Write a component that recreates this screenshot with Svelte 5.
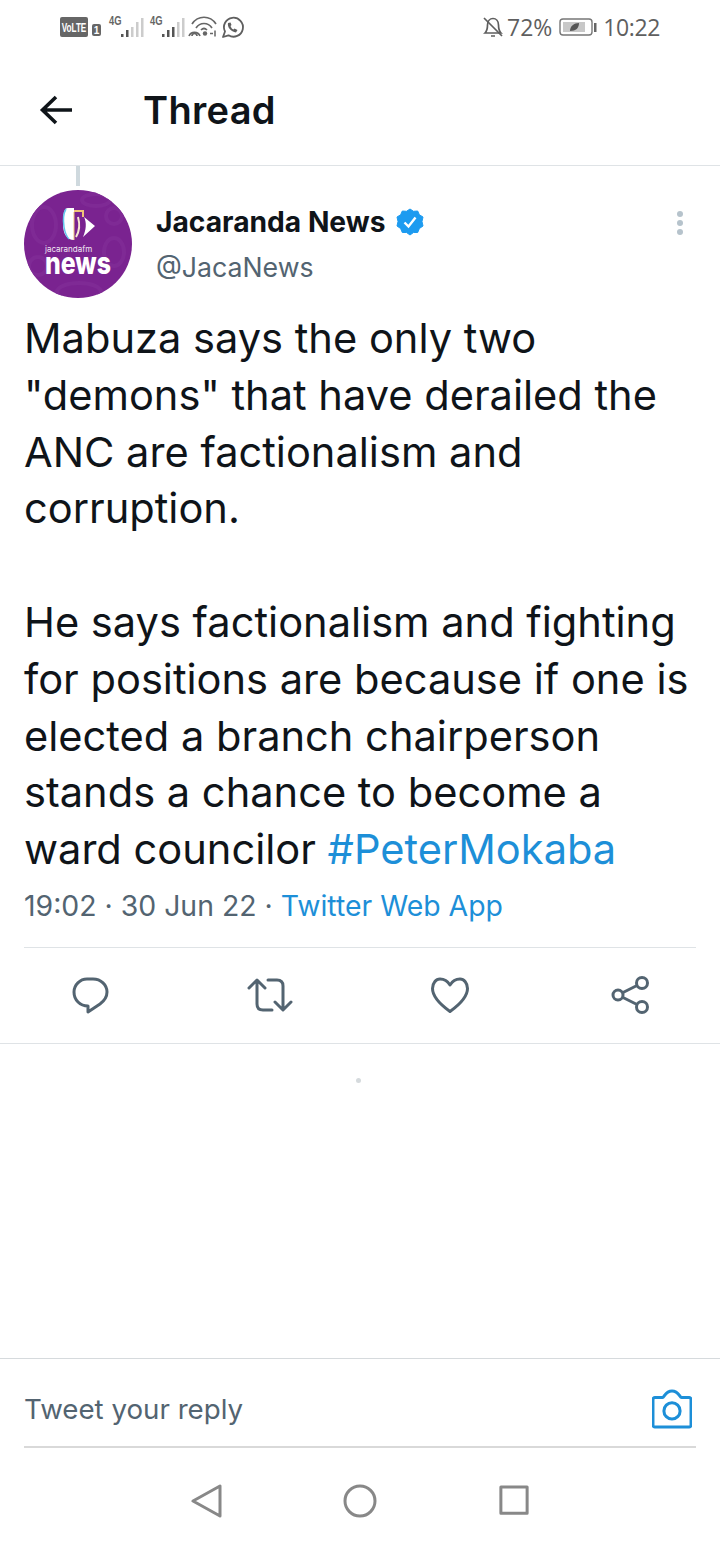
<script>
    const lines1 = [
        "Mabuza says the only two",
        '"demons" that have derailed the',
        "ANC are factionalism and",
        "corruption.",
    ];
    const lines2 = [
        "He says factionalism and fighting",
        "for positions are because if one is",
        "elected a branch chairperson",
        "stands a chance to become a",
    ];
</script>

<style>
    :global(body) {
        margin: 0;
        background: #fff;
    }
    .page {
        width: 720px;
        height: 1541px;
        display: flex;
        flex-direction: column;
        font-family: Inter, "Liberation Sans", sans-serif;
        color: #0f1419;
        overflow: hidden;
    }
    .status {
        height: 55px;
        display: flex;
        justify-content: space-between;
        padding-left: 60px;
        padding-right: 60px;
        color: #5f5f5f;
        font-family: "Open Sans", sans-serif;
        font-size: 23px;
    }
    .status-right {
        display: flex;
        align-items: center;
        padding-bottom: 2px;
    }
    .status-left {
        display: block;
    }
    .pct {
        margin-left: 4px;
    }
    .battery {
        margin: 0 6px 0 7px;
    }
    .time {
        letter-spacing: -0.4px;
    }
    .header {
        height: 111px;
        box-sizing: border-box;
        border-bottom: 1px solid #dfe3e6;
        display: flex;
        align-items: center;
        padding-left: 39px;
        gap: 70px;
    }
    .title {
        font-size: 38px;
        font-weight: 600;
        letter-spacing: 0.3px;
    }
    .thread-line {
        width: 4px;
        height: 20px;
        margin-left: 76px;
        background: #cfd9de;
    }
    .author {
        display: flex;
        margin: 4px 24px 0;
        gap: 24px;
        height: 108px;
    }
    .avatar {
        display: block;
    }
    .names {
        padding-top: 13px;
    }
    .name-row {
        display: flex;
        align-items: center;
        gap: 10px;
        font-size: 28.2px;
        font-weight: 700;
        height: 38px;
    }
    .handle {
        font-size: 26.7px;
        color: #536471;
        margin-top: 10px;
    }
    .more {
        margin-left: auto;
        margin-top: 21px;
        margin-right: 13px;
        display: flex;
        flex-direction: column;
        gap: 3px;
    }
    .more i {
        display: block;
        width: 6px;
        height: 6px;
        border-radius: 50%;
        background: #b6c3cc;
    }
    .body {
        margin: 12px 24px 0;
        font-size: 41.6px;
        line-height: 56.8px;
        white-space: nowrap;
    }
    .gap {
        height: 56.8px;
    }
    .tag,
    .source {
        color: #1d8fd8;
    }
    .meta {
        margin: 6px 24px 0;
        font-size: 28.4px;
        line-height: 44px;
        color: #536471;
    }
    .sep {
        margin: 19px 24px 0;
        height: 1px;
        background: #dfe3e6;
    }
    .actions {
        height: 95px;
        display: grid;
        grid-template-columns: repeat(4, 180px);
        align-items: center;
        justify-items: center;
    }
    .rule {
        height: 1px;
        background: #dfe3e6;
    }
    .spacer {
        flex: 1;
        position: relative;
    }
    .dot {
        position: absolute;
        left: 356px;
        top: 34px;
        width: 5px;
        height: 5px;
        border-radius: 50%;
        background: #d5dadd;
    }
    .reply {
        border-top: 1px solid #d6dadd;
    }
    .reply-inner {
        margin: 0 24px;
        height: 89px;
        box-sizing: border-box;
        border-bottom: 2px solid #d9d9d9;
        display: flex;
        align-items: center;
        justify-content: space-between;
        font-size: 27.7px;
        color: #536471;
        padding: 12px 4px 0 0;
    }
    .nav {
        height: 93px;
        display: flex;
        justify-content: center;
    }
    .nav-slot {
        width: 153.5px;
        display: flex;
        justify-content: center;
        padding-top: 36px;
        align-items: flex-start;
    }
    .square {
        margin-top: 1px;
    }
</style>

<div class="page">
    <div class="status">
        <div class="status-left">
            <svg width="185" height="55" viewBox="0 0 185 55">
                <rect x="0" y="17" width="28" height="20" rx="2" fill="#666" />
                <text transform="translate(14 32) scale(.68 1)" text-anchor="middle" font-family="Liberation Sans" font-size="12" font-weight="700" fill="#fff">VoLTE</text>
                <rect x="32" y="24" width="9" height="12" rx="2" fill="#666" />
                <text x="36.500" y="34" text-anchor="middle" font-family="Liberation Sans" font-size="10" font-weight="700" fill="#fff">1</text>

                <text transform="translate(49 25) scale(.72 1)" font-family="Liberation Sans" font-size="13" font-weight="700" fill="#666">4G</text>
                <g fill="#555"><rect x="61" y="34" width="2.500" height="3" /><rect x="66" y="30" width="2.500" height="7" /></g>
                <g fill="#ccc"><rect x="71" y="27" width="2.500" height="10" /><rect x="76" y="22" width="2.500" height="15" /><rect x="81" y="18" width="2.500" height="19" /></g>

                <text transform="translate(90 25) scale(.72 1)" font-family="Liberation Sans" font-size="13" font-weight="700" fill="#666">4G</text>
                <g fill="#555"><rect x="102" y="34" width="2.500" height="3" /><rect x="107" y="30" width="2.500" height="7" /><rect x="112" y="27" width="2.500" height="10" /></g>
                <g fill="#ccc"><rect x="117" y="22" width="2.500" height="15" /><rect x="122" y="18" width="2.500" height="19" /></g>

                <g fill="none" stroke="#666" stroke-width="1.700">
                    <path d="M132 24 C138 15 150 15 156 24" />
                    <path d="M136 28 C140 22 148 22 152 28" />
                    <path d="M141 30 C143 28 145 28 147 30" />
                    <path d="M129 36 A6 6 0 0 1 140 36" />
                    <path d="M132 36 A2.500 2.500 0 0 1 137 36" />
                </g>
                <circle cx="145" cy="33.500" r="2.200" fill="#666" />
                <path d="M150 33.500h3M155 30.500v6" stroke="#666" stroke-width="1.500" />

                <path d="M163 37 L165 31.500 A9.500 9.500 0 1 1 168.500 35.300 Z" fill="none" stroke="#5f5f5f" stroke-width="1.800" stroke-linejoin="round" />
                <path d="M168 23 C167 27 171 32 176 32.500 L177.500 30 L174.500 28.500 L173.500 29.500 C172 29 171 27.500 170.500 26 L171.500 25 L170.500 22.500 Z" fill="#5f5f5f" />
            </svg>
        </div>
        <div class="status-right">
            <svg width="20" height="22" viewBox="0 0 20 22" fill="none" stroke="#5f5f5f" stroke-width="1.700">
                <path d="M2 17 C4 15 4.500 13 4.500 9 C4.500 5 7 2.500 10 2.500 C13 2.500 15.500 5 15.500 9 C15.500 13 16 15 18 17 Z" />
                <path d="M8 20h4M1 2l18 18" />
            </svg>
            <span class="pct">72%</span>
            <svg class="battery" width="38" height="18" viewBox="0 0 38 18">
                <rect x="1" y="1" width="32" height="16" rx="3" fill="none" stroke="#777" stroke-width="1.400" />
                <rect x="4" y="4" width="22" height="10" fill="#c8c8c8" />
                <path d="M11 13 C11 8 15 5 20 5 C20 10 17 13 11 13Z" fill="#555" />
                <rect x="35" y="5" width="2.500" height="9" fill="#666" />
            </svg>
            <span class="time">10:22</span>
        </div>
    </div>

    <div class="header">
        <svg width="34" height="32" viewBox="0 0 34 32" fill="none" stroke="#0f1419" stroke-width="3.600">
            <path d="M33 16H4M17 3 3.500 16 17 29" />
        </svg>
        <div class="title">Thread</div>
    </div>

    <div class="thread-line"></div>

    <div class="author">
        <svg class="avatar" width="108" height="108" viewBox="0 0 108 108">
            <defs><clipPath id="round"><circle cx="54" cy="54" r="54" /></clipPath></defs>
            <circle cx="54" cy="54" r="54" fill="#7a2390" />
            <g clip-path="url(#round)" fill="none" stroke="#7f2a95" stroke-width="4">
                <ellipse cx="20" cy="35" rx="12" ry="18" />
                <ellipse cx="90" cy="62" rx="10" ry="14" />
                <ellipse cx="55" cy="102" rx="22" ry="9" />
                <ellipse cx="72" cy="10" rx="14" ry="6" />
                <circle cx="14" cy="76" r="9" />
                <circle cx="90" cy="26" r="8" />
            </g>
            <path d="M44 18 H50 V50 C43 50 39 44 39 34 C39 24 40 18 44 18Z" fill="#fff" />
            <path d="M42 19 C39.500 23 39 30 40 37 C41 43 43 47 45 49" fill="none" stroke="#63c6ee" stroke-width="1.500" />
            <path d="M50 21 H59 V27" fill="none" stroke="#f0c478" stroke-width="2" />
            <path d="M50 22 V50" stroke="#f0c478" stroke-width="1" />
            <path d="M60 27 L71 36 L59 47 C62 40 63 33 60 27Z" fill="#fff" />
            <path d="M54 27 C56 34 55 42 52 47" fill="none" stroke="#f7e7cf" stroke-width="2" />
            <text x="21" y="62" font-family="Inter, sans-serif" font-size="8" fill="#fff" opacity=".9">jacarandafm</text>
            <text transform="translate(21 84)" font-family="Inter, sans-serif" font-size="31" font-weight="800" fill="#fff" textLength="66" lengthAdjust="spacingAndGlyphs">news</text>
        </svg>
        <div class="names">
            <div class="name-row">
                <span>Jacaranda News</span>
                <svg width="28" height="28" viewBox="0 0 28 28">
                    <path d="M14 1 L17.500 3.300 L21.700 3 L23.400 6.800 L27 9 L26 13.500 L27 18 L23.400 20.500 L21.700 24.500 L17.500 24.500 L14 27 L10.500 24.500 L6.300 24.500 L4.600 20.500 L1 18 L2 13.500 L1 9 L4.600 6.800 L6.300 3 L10.500 3.300 Z" fill="#1d9bf0" stroke="#1d9bf0" stroke-linejoin="round" stroke-width="1" />
                    <path d="M8.500 14.500 L12.500 18.500 L19.500 9.500" fill="none" stroke="#fff" stroke-width="2.400" />
                </svg>
            </div>
            <div class="handle">@JacaNews</div>
        </div>
        <div class="more"><i></i><i></i><i></i></div>
    </div>

    <div class="body">
        {#each lines1 as line}
            <div>{line}</div>
        {/each}
        <div class="gap"></div>
        {#each lines2 as line}
            <div>{line}</div>
        {/each}
        <div>ward councilor <span class="tag">#PeterMokaba</span></div>
    </div>

    <div class="meta">19:02 · 30 Jun 22 · <span class="source">Twitter Web App</span></div>

    <div class="sep"></div>

    <div class="actions">
        <svg width="37" height="37" viewBox="0 0 37 37" fill="none" stroke="#536471" stroke-width="3" stroke-linejoin="round">
            <path d="M15 2 H21 C29 2 35 8 35 15 C35 21 32 24 28 27 L16 35 V29 C8 29 2 23 2 15 C2 8 8 2 15 2 Z" />
        </svg>
        <svg width="46" height="36" viewBox="0 0 46 36" fill="none" stroke="#536471" stroke-width="3" stroke-linecap="round" stroke-linejoin="round">
            <path d="M2 11 L10 3 L18 11 M10 4 V27 C10 31 12 33 16 33 H25" />
            <path d="M44 25 L36 33 L28 25 M36 32 V9 C36 5 34 3 30 3 H21" />
        </svg>
        <svg width="38" height="36" viewBox="0 0 38 36" fill="none" stroke="#536471" stroke-width="3" stroke-linejoin="round">
            <path d="M19 8 C16 3 12 2 9 2 C5 2 1.500 6 1.500 11.500 C1.500 20 10 28 19 34.500 C28 28 36.500 20 36.500 11.500 C36.500 6 33 2 29 2 C26 2 22 3 19 8 Z" />
        </svg>
        <svg width="38" height="38" viewBox="0 0 38 38" fill="none" stroke="#536471" stroke-width="3">
            <circle cx="7" cy="19" r="5" />
            <circle cx="31" cy="7" r="5.500" />
            <circle cx="31" cy="31" r="5.500" />
            <path d="M12 16.500 L26 9.500 M12 21.500 L26 28.500" />
        </svg>
    </div>
    <div class="rule"></div>

    <div class="spacer"><div class="dot"></div></div>

    <div class="reply">
        <div class="reply-inner">
            <span>Tweet your reply</span>
            <svg width="40" height="40" viewBox="0 0 42 42" fill="none" stroke="#1d8fd8" stroke-width="3.200" stroke-linejoin="round">
                <path d="M3 9 H11 C13 9 14 2 21 2 C28 2 29 9 31 9 H39 C40 9 41 10 41 11 V38 C41 39 40 40 39 40 H3 C2 40 1 39 1 38 V11 C1 10 2 9 3 9 Z" />
                <circle cx="21" cy="23" r="8.500" />
            </svg>
        </div>
    </div>

    <div class="nav">
        <div class="nav-slot">
            <svg width="32" height="34" viewBox="0 0 32 34" fill="none" stroke="#888" stroke-width="3" stroke-linejoin="round">
                <path d="M29 2 V32 L2 17 Z" />
            </svg>
        </div>
        <div class="nav-slot">
            <svg width="34" height="34" viewBox="0 0 34 34" fill="none" stroke="#888" stroke-width="3">
                <circle cx="17" cy="17" r="15" />
            </svg>
        </div>
        <div class="nav-slot">
            <svg class="square" width="30" height="30" viewBox="0 0 32 32" fill="none" stroke="#888" stroke-width="3.200" stroke-linejoin="round">
                <rect x="2" y="2" width="28" height="28" />
            </svg>
        </div>
    </div>
</div>
